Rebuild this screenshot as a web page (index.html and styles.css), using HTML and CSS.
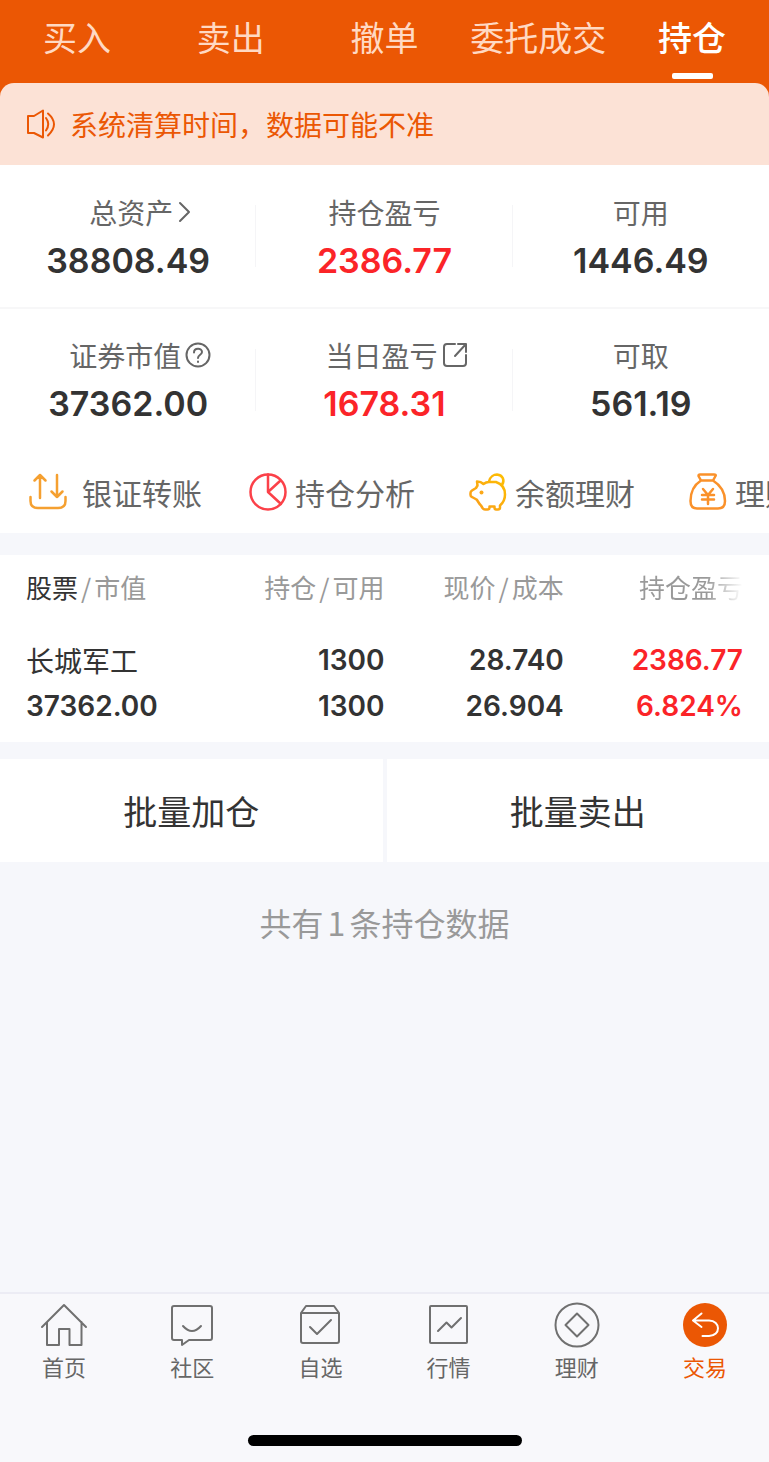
FILE: index.html
```html
<!DOCTYPE html>
<html lang="zh-CN">
<head>
    <meta charset="UTF-8">
    <meta name="viewport" content="width=device-width, initial-scale=1.0">
    <title>持仓</title>
    <link rel="stylesheet" href="styles.css">
</head>
<body>
    <header class="header">
        <nav class="top-tabs">
            <a href="#buy">买入</a>
            <a href="#sell">卖出</a>
            <a href="#cancel">撤单</a>
            <a href="#orders">委托成交</a>
            <a href="#holdings" class="active">持仓</a>
        </nav>
        <div class="notice">
            <svg class="notice-icon" width="30" height="30" viewBox="0 0 30 30">
                <path d="M2 7H8L17 1.500V28.500L8 24H2Z"/>
                <path d="M20 9Q24.500 15 20 21.500M22 4.500Q34 15 22 26.500"/>
            </svg>
            <span>系统清算时间，数据可能不准</span>
        </div>
    </header>

    <main class="content">
        <section class="assets">
            <div class="asset">
                <a href="#total" class="asset-label">总资产<svg width="18" height="24" viewBox="0 0 18 24"><path d="M7 3L16 12L7 21"/></svg></a>
                <div class="asset-value">38808.49</div>
            </div>
            <div class="asset">
                <div class="asset-label">持仓盈亏</div>
                <div class="asset-value red">2386.77</div>
            </div>
            <div class="asset">
                <div class="asset-label">可用</div>
                <div class="asset-value">1446.49</div>
            </div>
            <div class="asset">
                <a href="#help" class="asset-label">证券市值<svg width="30" height="26" viewBox="0 0 30 26"><circle cx="17" cy="13" r="11.500"/><path d="M13 10.500C13 5.500 21 5.500 21 10C21 13 17 12.500 17 16"/><path d="M17 19.500V20"/></svg></a>
                <div class="asset-value">37362.00</div>
            </div>
            <div class="asset">
                <a href="#today" class="asset-label">当日盈亏<svg width="30" height="26" viewBox="0 0 30 26"><path d="M17 2H9Q6 2 6 5V21Q6 24 9 24H25Q28 24 28 21V13M17 14L28 2M20 2H28V10"/></svg></a>
                <div class="asset-value red">1678.31</div>
            </div>
            <div class="asset">
                <div class="asset-label">可取</div>
                <div class="asset-value">561.19</div>
            </div>
        </section>

        <nav class="shortcuts">
            <a href="#transfer">
                <svg width="45" height="38" viewBox="0 0 45 38" stroke="#f5a030">
                    <path d="M1.500 24V28Q1.500 35 9 35H29Q36.500 35 36.500 28V24M11 25V2M5.500 7.500L11 2L16.500 7.500M28 2V24M22.500 18.500L28 24L33.500 18.500"/>
                </svg>
                银证转账
            </a>
            <a href="#analysis">
                <svg width="38" height="38" viewBox="0 0 38 38" stroke="#fb4149">
                    <circle cx="19" cy="19" r="17.500"/>
                    <path d="M19 1.500V19L32 31M19 19L31 8"/>
                </svg>
                持仓分析
            </a>
            <a href="#balance">
                <svg width="38" height="38" viewBox="0 0 38 38" stroke="url(#pig)">
                    <defs>
                        <linearGradient id="pig" gradientUnits="userSpaceOnUse" x1="0" y1="38" x2="38" y2="0">
                            <stop offset="0" stop-color="#fa9a1c"/>
                            <stop offset="1" stop-color="#fdc000"/>
                        </linearGradient>
                    </defs>
                    <path d="M8 8.500Q12 8.500 14.500 11Q17 9 20 9H27C33 11 36 15.500 36 21.500C36 26.500 34 30 31 32.500V34.500Q31 36.500 29 36.500H27Q25.500 36.500 25.500 34.500V33.500H20.500V34.500Q20.500 36.500 18.500 36.500H16Q14.500 36.500 13.500 35L12 32.500C10 31 9 28 7.500 26.500L3 24Q1.500 23.500 1.500 22V20Q1.500 18.500 3 17.500L7 15L8.500 12.500Z"/>
                    <path d="M20 8.500C21 3.500 25 1.500 28 1.500C34 2 36 7.500 33 12"/>
                    <circle cx="12.500" cy="19.500" r="2" fill="#fba818" stroke="none"/>
                </svg>
                余额理财
            </a>
            <a href="#wealth">
                <svg width="38" height="38" viewBox="0 0 38 38" stroke="#fa912a">
                    <path d="M12 7.500L9.500 3Q9.500 1.500 11 1.500H25Q27.500 1.500 26.500 3L24 7.500ZM12 7.500C5 12 1.500 19 1.500 28Q1.500 35.500 8 35.500H29Q36 35.500 36 28C36 19 31 12 24 7.500"/>
                    <path d="M14 16L19 22L24 16M13 22H25M13 26.500H25M19 22V31"/>
                </svg>
                理财
            </a>
        </nav>

        <section class="holdings">
            <table>
                <thead>
                    <tr>
                        <th><b>股票</b><i>/</i>市值</th>
                        <th>持仓<i>/</i>可用</th>
                        <th>现价<i>/</i>成本</th>
                        <th><span class="fade">持仓盈亏</span></th>
                    </tr>
                </thead>
                <tbody>
                    <tr>
                        <td class="stock">长城军工</td>
                        <td>1300</td>
                        <td>28.740</td>
                        <td class="red">2386.77</td>
                    </tr>
                    <tr>
                        <td>37362.00</td>
                        <td>1300</td>
                        <td>26.904</td>
                        <td class="red">6.824%</td>
                    </tr>
                </tbody>
            </table>
        </section>

        <div class="batch">
            <button type="button">批量加仓</button>
            <button type="button">批量卖出</button>
        </div>
        <p class="summary">共有<span class="count">1</span>条持仓数据</p>
    </main>

    <footer class="footer">
        <nav class="tab-bar">
            <a href="#home">
                <svg width="48" height="48" viewBox="0 0 48 48"><path d="M2 25L24 3L46 25M7 20V43H19V27H29.500V43H41.500V20"/></svg>
                首页
            </a>
            <a href="#community">
                <svg width="48" height="48" viewBox="0 0 48 48"><path d="M6 4H42Q44 4 44 6V36Q44 38 42 38H21L14 43V38H6Q4 38 4 36V6Q4 4 6 4Z"/><path d="M15 24Q24 34 33 24"/></svg>
                社区
            </a>
            <a href="#watchlist">
                <svg width="48" height="48" viewBox="0 0 48 48"><path d="M5 11L10 4H38L43 11V39Q43 41 41 41H7Q5 41 5 39ZM5 11H43M14 25L21 32L35 18"/></svg>
                自选
            </a>
            <a href="#market">
                <svg width="48" height="48" viewBox="0 0 48 48"><rect x="5" y="4" width="37" height="37" rx="1"/><path d="M13 29L21.500 20.500L26.500 25.500L36 16"/></svg>
                行情
            </a>
            <a href="#finance">
                <svg width="48" height="48" viewBox="0 0 48 48"><circle cx="24" cy="23" r="21.500"/><path d="M24 11.500L35.500 23L24 34.500L12.500 23Z"/></svg>
                理财
            </a>
            <a href="#trade" class="active">
                <svg width="48" height="48" viewBox="0 0 48 48"><circle cx="24" cy="23" r="22" fill="#eb5704" stroke="none"/><path d="M20.500 11.500L12 18.500L20.500 25M12 18.500H28C40 18.500 40 34 28 34H21.500" stroke="#fff"/></svg>
                交易
            </a>
        </nav>
        <div class="home-indicator"></div>
    </footer>
</body>
</html>
```
FILE: styles.css
```css
* {
    box-sizing: border-box;
}
body {
    margin: 0;
    min-height: 100vh;
    display: flex;
    flex-direction: column;
    background-color: #f6f7fb;
    color: #333;
    font-family: "Noto Sans CJK SC", sans-serif;
    font-size: 28px;
    line-height: 40px;
    overflow-x: hidden;
}
a {
    color: inherit;
    text-decoration: none;
}
svg {
    flex: none;
    fill: none;
    stroke-linecap: round;
    stroke-linejoin: round;
}
.red {
    color: #fb2428;
}

/* 顶部 */
.header {
    background-color: #eb5704;
}
.top-tabs {
    display: grid;
    grid-template-columns: repeat(5, 1fr);
    padding-top: 13px;
}
.top-tabs a {
    display: flex;
    flex-direction: column;
    align-items: center;
    height: 70px;
    color: #ffd9c3;
    font-size: 34px;
    line-height: 48px;
    white-space: nowrap;
}
.top-tabs .active {
    color: #fff;
    font-weight: 500;
}
.top-tabs .active::after {
    content: "";
    width: 41px;
    height: 6px;
    margin-top: 12px;
    border-radius: 2px;
    background-color: #fff;
}
.notice {
    display: flex;
    align-items: center;
    gap: 14px;
    height: 82px;
    padding: 0 26px;
    border-radius: 14px 14px 0 0;
    background-color: #fce2d6;
    color: #eb5704;
}
.notice-icon {
    stroke: #eb5704;
    stroke-width: 2;
}

.content {
    flex: 1;
}
.assets {
    display: grid;
    grid-template-columns: repeat(3, 1fr);
    background-color: #fff;
}
.asset {
    display: flex;
    flex-direction: column;
    align-items: center;
    height: 143px;
    padding-top: 26px;
    background: linear-gradient(#f5f5f7, #f5f5f7) no-repeat right 40px / 1px 62px;
}
.asset:nth-child(3n) {
    background: none;
}
.asset:nth-child(-n+3) {
    height: 144px;
    padding-top: 27px;
    border-bottom: 2px solid #f7f7f8;
}
.asset-label {
    display: flex;
    align-items: center;
    color: #666;
}
a.asset-label {
    padding-left: 24px;
}
.asset-label svg {
    stroke: #666;
    stroke-width: 2;
}
.asset-value {
    margin-top: 7px;
    font-family: Inter, sans-serif;
    font-size: 34px;
    font-weight: 600;
    line-height: 44px;
}

.shortcuts {
    display: grid;
    grid-auto-flow: column;
    grid-auto-columns: 220px;
    height: 81px;
    padding: 0 0 2px 29px;
    background-color: #fff;
    color: #666;
    font-size: 30px;
    overflow: hidden;
}
.shortcuts a {
    display: flex;
    align-items: center;
    gap: 8px;
    white-space: nowrap;
}
.shortcuts svg {
    stroke-width: 2.5;
}

.holdings {
    margin: 22px 0 17px;
    padding: 10px 26px 13px;
    background-color: #fff;
}
table {
    width: 100%;
    table-layout: fixed;
    border-collapse: collapse;
}
th, td {
    padding: 0;
    text-align: right;
    white-space: nowrap;
}
th:first-child, td:first-child {
    text-align: left;
}
th {
    height: 72px;
    padding-bottom: 28px;
    color: #999;
    font-size: 26px;
    font-weight: 400;
}
th b {
    color: #333;
    font-weight: 400;
}
th i {
    margin: 0 3px;
    font-style: normal;
}
.fade {
    background: linear-gradient(to right, #999 65%, #fff);
    background-clip: text;
    -webkit-background-clip: text;
    color: transparent;
}
td {
    height: 46px;
    font-family: Inter, sans-serif;
    font-weight: 600;
}
.stock {
    font-family: "Noto Sans CJK SC", sans-serif;
    font-weight: 400;
}

.batch {
    display: grid;
    grid-template-columns: 1fr 1fr;
    gap: 4px;
}
.batch button {
    height: 103px;
    padding: 0;
    border: none;
    background-color: #fff;
    color: #333;
    font-family: inherit;
    font-size: 34px;
    cursor: pointer;
}
.summary {
    margin: 40px 0;
    color: #999;
    font-size: 32px;
    text-align: center;
}
.count {
    margin: 0 4px;
}

/* 底部导航 */
.footer {
    border-top: 2px solid #ececf4;
    background-color: #f8f8fb;
}
.tab-bar {
    display: grid;
    grid-template-columns: repeat(6, 1fr);
    padding-top: 8px;
}
.tab-bar a {
    display: flex;
    flex-direction: column;
    align-items: center;
    color: #666;
    font-size: 22px;
    line-height: 32px;
}
.tab-bar svg {
    stroke: #707070;
    stroke-width: 2;
}
.tab-bar .active {
    color: #eb5704;
}
.home-indicator {
    width: 274px;
    height: 11px;
    margin: 53px auto 16px;
    border-radius: 6px;
    background-color: #000;
}
```
